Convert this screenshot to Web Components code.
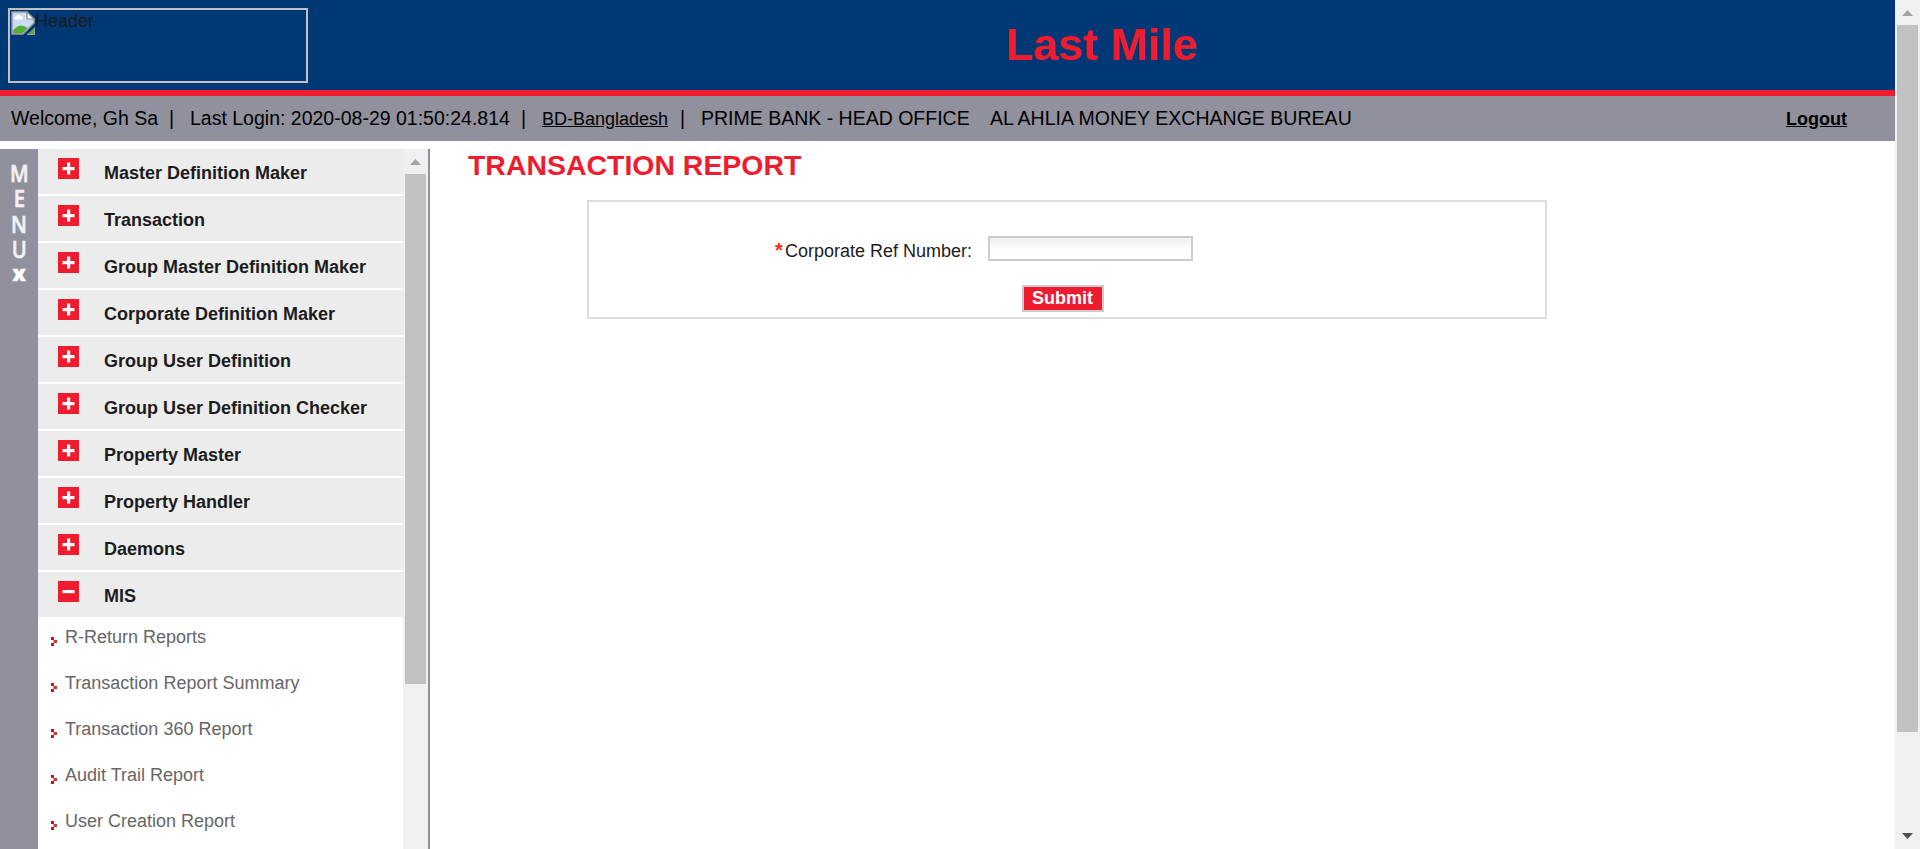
<!DOCTYPE html>
<html lang="en"><head><meta charset="utf-8"><title>Last Mile</title>
<style>
html,body{margin:0;height:100%;overflow:hidden;background:#fff}
body{font:18px "Liberation Sans",Arial,sans-serif;color:#1c1c1c}
</style></head><body>
<lm-app></lm-app>
<script>
const define=(name,html,setup)=>customElements.define(name,class extends HTMLElement{
  constructor(){super();this.attachShadow({mode:'open'});}
  connectedCallback(){
    const t=document.createElement('template');
    t.innerHTML=html;
    this.shadowRoot.replaceChildren(t.content.cloneNode(true));
    if(setup)setup(this,this.shadowRoot);
  }
});

define('lm-header',`<style>
:host{display:grid;grid-template-columns:312px 1fr;height:90px;background:#003876;border-bottom:6px solid #ee1c2e}
.logo{box-sizing:border-box;width:300px;height:75px;margin:8px 0 0 8px;border:2px solid silver;padding:1px;display:flex;align-items:flex-start;line-height:20px}
svg{display:block;flex:none}
h1{margin:0;padding-right:4px;font-size:44.800px;line-height:89px;color:#ee1c2e;text-align:center}
</style>
<div class="logo"><svg width="24" height="24" viewBox="0 0 24 24">
<path d="M1 1H16L23 8V12L12 23H1Z" fill="#c9dcf6" stroke="#9a9a9a" stroke-width="1.5"/>
<path d="M3.500 8.500a2.200 2.200 0 0 1 1.500-3 3 3 0 0 1 5.500 0 2 2 0 0 1 1 3z" fill="#fff"/>
<path d="M1.800 22.300V20Q5 15 10 14.500Q14 14.500 16.500 17L11.500 22.300Z" fill="#57ad33"/>
<path d="M16 1V8H23Z" fill="#fff" stroke="#8c8c8c" stroke-width="1.2"/>
<path d="M24 16V24H15.500Z" fill="#57ad33"/><path d="M23.400 17V23.400H16" fill="none" stroke="#999" stroke-width="1.200"/>
</svg><span>Header</span></div><h1><slot></slot></h1>`);

define('lm-userbar',`<style>
:host{display:flex;align-items:baseline;height:45px;background:#91919d;color:#000;font-size:19.500px;line-height:44px;white-space:pre;padding-left:11px;box-sizing:border-box}
a{font-size:18px;text-decoration:underline}
.w{width:158px}.l{width:331px}.s{width:21px}.b{width:138px}.p{width:289px}
.n{letter-spacing:.03px}
.out{font-weight:bold;margin:0 48px 0 auto}
</style><span class="w">Welcome, Gh Sa</span><span class="s">|</span><span class="l">Last Login: 2020-08-29 01:50:24.814</span><span class="s">|</span><a class="b"><span>BD-Bangladesh</span></a><span class="s">|</span><span class="p">PRIME BANK - HEAD OFFICE</span><span class="n">AL AHLIA MONEY EXCHANGE BUREAU</span><a class="out">Logout</a>`);

define('lm-scrollbar',`<style>
:host{display:flex;flex-direction:column;width:25px;background:#f0f0f0;flex:none}
svg{display:block;flex:none}.thumb{width:21px;margin-left:2px;background:#c1c1c1}
.down{margin-top:auto}
</style><svg width="25" height="25"><path d="M7 16H18L12.500 10Z" fill="#a3a3a3"/></svg><div class="thumb"></div><svg class="down" width="25" height="25"><path d="M7 9H18L12.500 15Z" fill="#505050"/></svg>`,
(h,r)=>{r.querySelector('.thumb').style.height=h.getAttribute('thumb')+'px';if(!h.hasAttribute('down'))r.querySelector('.down').remove();});

define('lm-menu-item',`<style>
:host{display:flex;align-items:flex-start;height:45px;background:#ececec;margin-bottom:2px;font-weight:bold;line-height:48px;white-space:nowrap}
:host([open]){margin-bottom:0}
svg{display:block;margin:9px 25px 0 20px;flex:none}
:host([open]) .v{display:none}
</style><svg width="21" height="21"><path fill="#ee1c2e" d="M0 0H21V21H0Z"/><path fill="#fff" d="M4.500 9H16.500V12.200H4.500Z"/><path class="v" fill="#fff" d="M9 4.500H12.200V16.500H9Z"/></svg><slot></slot>`);

define('lm-sub-item',`<style>
:host{display:flex;height:46px;line-height:40px;padding-left:13px;color:#666;white-space:nowrap}
svg{display:block;margin:20px 8px 0 0;flex:none}
</style><svg width="6" height="9"><path fill="#c4161c" d="M0 0H3V3H0ZM0 6H3V9H0Z"/><path fill="#cf3338" d="M2.500 3H6V6H2.500Z"/></svg><slot></slot>`);

define('lm-menu-tab',`<style>
:host{display:flex;flex-direction:column;align-items:center;width:38px;background:#91919d;color:#f1f1f4;font:600 22.500px/25.400px "Open Sans","Noto Sans",sans-serif;padding-top:12px;box-sizing:border-box;flex:none}
span{display:block;transform:scaleX(.9);-webkit-text-stroke:.6px #f1f1f4}
.x{font-weight:800;font-size:21px;line-height:20px;color:#fff;transform:none}
</style><span>M</span><span>E</span><span>N</span><span>U</span><span class="x">x</span>`);

define('lm-sidebar',`<style>
:host{display:flex;width:430px;box-sizing:border-box;border-right:2px solid #91919d;flex:none;min-height:0;overflow:hidden}
nav{width:365px;overflow:hidden}
</style><lm-menu-tab></lm-menu-tab><nav>
<lm-menu-item>Master Definition Maker</lm-menu-item><lm-menu-item>Transaction</lm-menu-item><lm-menu-item>Group Master Definition Maker</lm-menu-item><lm-menu-item>Corporate Definition Maker</lm-menu-item><lm-menu-item>Group User Definition</lm-menu-item><lm-menu-item>Group User Definition Checker</lm-menu-item><lm-menu-item>Property Master</lm-menu-item><lm-menu-item>Property Handler</lm-menu-item><lm-menu-item>Daemons</lm-menu-item><lm-menu-item open>MIS</lm-menu-item>
<lm-sub-item>R-Return Reports</lm-sub-item><lm-sub-item>Transaction Report Summary</lm-sub-item><lm-sub-item>Transaction 360 Report</lm-sub-item><lm-sub-item>Audit Trail Report</lm-sub-item><lm-sub-item>User Creation Report</lm-sub-item>
</nav><lm-scrollbar thumb="510"></lm-scrollbar>`);

define('lm-report',`<style>
:host{display:block;flex:1;padding-left:38px}
h2{margin:0;font-size:28.450px;line-height:32px;color:#ee1c2e}
form{box-sizing:border-box;width:960px;height:119px;margin:19px 0 0 119px;border:2px solid #ddd;padding:34px 0 0 186px}
.row{display:flex;height:25px}
label{width:213px;line-height:28px;white-space:nowrap;display:flex;align-items:baseline}
b{font-size:20px;color:#f62b10;width:10px}
input{box-sizing:border-box;width:205px;height:25px;border:2px solid #ccc;padding:0 4px;background:linear-gradient(#f0f0f0,#fff 65%);font:18px "Liberation Sans",sans-serif;outline:0;border-radius:0}
button{display:block;box-sizing:border-box;width:82px;height:27px;margin:24px 0 0 247px;border:2px solid #ccc;padding:0 1px 1px 0;background:#ee1c2e;color:#fff;font:bold 18px/22px "Liberation Sans",sans-serif;border-radius:0}
</style><h2>TRANSACTION REPORT</h2><form><div class="row"><label><b>*</b>Corporate Ref Number:</label><input aria-label="Corporate Ref Number"></div><button type="button">Submit</button></form>`);

define('lm-app',`<style>
:host{display:flex;height:849px;width:100%;overflow:hidden}
.page{flex:1;display:flex;flex-direction:column;min-width:0}
.body{display:flex;flex:1;min-height:0;padding-top:8px}
</style><div class="page"><lm-header>Last Mile</lm-header><lm-userbar></lm-userbar><div class="body"><lm-sidebar></lm-sidebar><lm-report></lm-report></div></div><lm-scrollbar thumb="707" down></lm-scrollbar>`);
</script></body></html>
